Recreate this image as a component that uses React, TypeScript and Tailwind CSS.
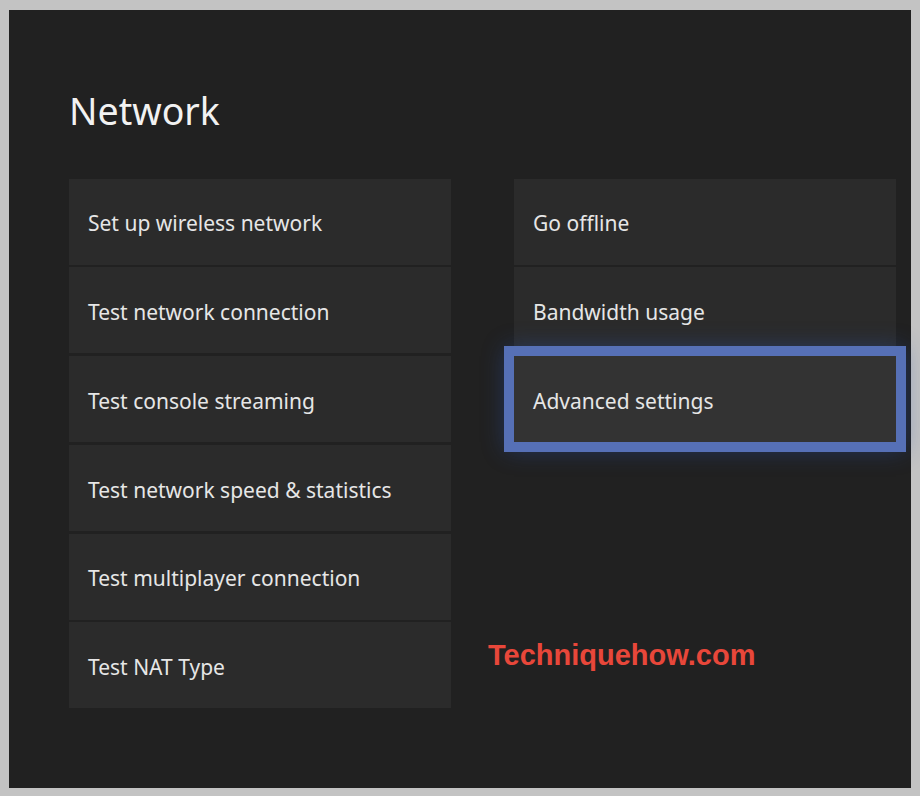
import React from 'react';

const leftItems = [
  'Set up wireless network',
  'Test network connection',
  'Test console streaming',
  'Test network speed & statistics',
  'Test multiplayer connection',
  'Test NAT Type',
];

const rightItems = ['Go offline', 'Bandwidth usage', 'Advanced settings'];

const Tile: React.FC<{ label: string; focused?: boolean }> = ({ label, focused }) => (
  <div
    className={
      focused
        ? 'h-[86px] flex items-center pl-[19px] pt-[5px] bg-[#333333] outline-[10px] outline-solid outline-[#5670b6] shadow-[0_0_22px_8px_rgba(40,80,170,0.45)]'
        : 'h-[86px] flex items-center pl-[19px] pt-[5px] bg-[#2b2b2b]'
    }
  >
    <span className="text-[21px] text-[#e6e6e6]">{label}</span>
  </div>
);

export default function App() {
  return (
    <div className="w-[920px] h-[796px] bg-[#c3c3c3] pt-[10px] pl-[9px]" style={{ fontFamily: '"Noto Sans", "Open Sans", sans-serif' }}>
      <div className="relative w-[902px] h-[778px] bg-[#212121] pl-[60px] pt-[82px]">
        <h1 className="text-[37.5px] leading-none text-[#f2f2f2] mb-[49px]">Network</h1>
        <div className="flex gap-[63px]">
          <div className="w-[382px] flex flex-col gap-[2.8px]">
            {leftItems.map((t) => (
              <Tile key={t} label={t} />
            ))}
          </div>
          <div className="w-[382px] flex flex-col gap-[2.8px]">
            {rightItems.map((t, i) => (
              <Tile key={t} label={t} focused={i === 2} />
            ))}
          </div>
        </div>
        <div
          className="absolute left-[479px] top-[624px] text-[29px] font-bold text-[#e8473a]"
          style={{ fontFamily: '"Liberation Sans", Arial, sans-serif' }}
        >
          Techniquehow.com
        </div>
      </div>
    </div>
  );
}
